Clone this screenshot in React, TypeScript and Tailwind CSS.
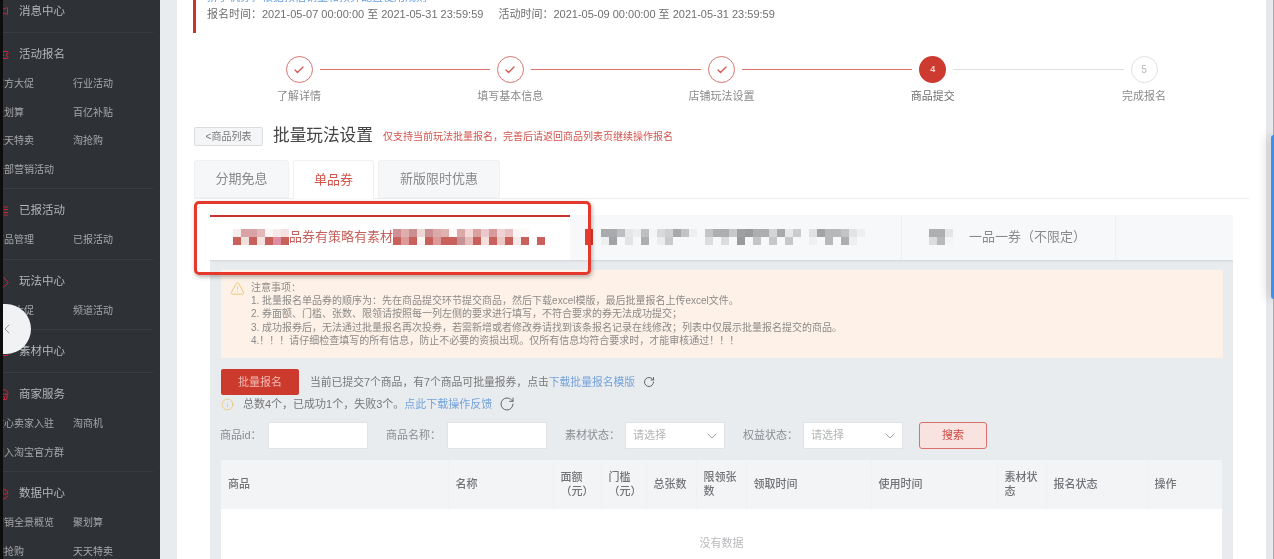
import { Check, ChevronDown, ChevronLeft, Info, LayoutList, Megaphone, MessageSquare, PieChart, RotateCw, Store, Tag, Ticket, TriangleAlert } from 'lucide-react'

const font = { fontFamily: '"Liberation Sans", "Noto Sans CJK SC", sans-serif' }

const menu = [
  { title: '消息中心', Icon: Megaphone, items: [] as string[] },
  { title: '活动报名', Icon: Ticket, items: ['官方大促', '行业活动', '聚划算', '百亿补贴', '天天特卖', '淘抢购', '全部营销活动'] },
  { title: '已报活动', Icon: LayoutList, items: ['商品管理', '已报活动'] },
  { title: '玩法中心', Icon: Tag, items: ['品牌大促', '频道活动'] },
  { title: '素材中心', Icon: MessageSquare, items: [] },
  { title: '商家服务', Icon: Store, items: ['放心卖家入驻', '淘商机', '加入淘宝官方群'] },
  { title: '数据中心', Icon: PieChart, items: ['营销全景概览', '聚划算', '淘抢购', '天天特卖'] },
]

const steps = [
  { label: '了解详情', state: 'done' },
  { label: '填写基本信息', state: 'done' },
  { label: '店铺玩法设置', state: 'done' },
  { label: '商品提交', state: 'current' },
  { label: '完成报名', state: 'todo' },
]

const notes = [
  '注意事项：',
  '1. 批量报名单品券的顺序为：先在商品提交环节提交商品，然后下载excel模版，最后批量报名上传excel文件。',
  '2. 券面额、门槛、张数、限领请按照每一列左侧的要求进行填写，不符合要求的券无法成功提交；',
  '3. 成功报券后，无法通过批量报名再次投券，若需新增或者修改券请找到该条报名记录在线修改；列表中仅展示批量报名提交的商品。',
  '4.！！！请仔细检查填写的所有信息，防止不必要的资损出现。仅所有信息均符合要求时，才能审核通过！！！',
]

const columns = [
  { label: <>商品</>, width: 'w-[227px]' },
  { label: <>名称</>, width: 'w-[105px]' },
  { label: <>面额<br />（元）</>, width: 'w-[48px]' },
  { label: <>门槛<br />（元）</>, width: 'w-[45px]' },
  { label: <>总张数</>, width: 'w-[50px]' },
  { label: <>限领张数</>, width: 'w-[50px]' },
  { label: <>领取时间</>, width: 'w-[125px]' },
  { label: <>使用时间</>, width: 'w-[126px]' },
  { label: <>素材状态</>, width: 'w-[49px]' },
  { label: <>报名状态</>, width: 'w-[101px]' },
  { label: <>操作</>, width: 'w-[75px]' },
]

const mosaicA = [
  ['#f6eeeb', '#d9a3a5', '#d9a3a5', '#e2b8b8', '#fbf6f5', '#f6e9e9', '#f8e0e0'],
  ['#c8615b', '#efe1de', '#c8615b', '#f4e2e0', '#c8615b', '#dc8fa2', '#c8615b'],
]
const mosaicB = [
  ['#cf8f96', '#e0adad', '#c98f92', '#ecd6d4', '#c98f92', '#dca9a9', '#e0b1b1', '#fdf8f7', '#dba9a7', '#f3d6d6', '#dba0a0', '#e8c8cc', '#d89a9a', '#efd2d2', '#e6c0c2', '#fbf6f3', '#fdf9f8', '#ffffff', '#ffffff'],
  ['#c8615b', '#dc9a98', '#c8615b', '#fdf5f4', '#c8615b', '#dc9a98', '#c8615b', '#c8615b', '#c49494', '#e8bcb8', '#c8615b', '#f6e0dc', '#c8615b', '#ecc8c4', '#c8615b', '#f6ebe8', '#c8615b', '#ffffff', '#c8615b'],
]
const mosaicC = [
  ['#e23f30', '#f7f8fa', '#a9aaad', '#a9aaad', '#bdbec0', '#e6e7e8', '#eceded', '#bebfc1', '#f4f5f6', '#d8d9da', '#cfd0d1', '#a8a9ab', '#c2c3c4', '#eeefef', '#f7f8fa', '#c4c5c6', '#adaeb0', '#adaeb0', '#c7c8c9', '#9fa0a2', '#9a9b9d', '#adaeb0', '#adaeb0', '#d4d5d6', '#a8a9ab', '#e6e7e8', '#cbcccd', '#f7f8fa', '#e0e1e2', '#a2a3a5', '#b7b8ba', '#b7b8ba', '#c2c3c4', '#e2e3e4', '#eeeff0'],
  ['#e23f30', '#f7f8fa', '#eeeff0', '#a2a3a5', '#f7f8fa', '#e2e3e4', '#f7f8fa', '#adaeb0', '#f7f8fa', '#ebeced', '#c9cacb', '#f7f8fa', '#f7f8fa', '#f7f8fa', '#f7f8fa', '#dcdddf', '#f7f8fa', '#dbdcdd', '#f7f8fa', '#9a9b9d', '#f7f8fa', '#c4c5c6', '#f7f8fa', '#c6c7c8', '#f7f8fa', '#c6c7c8', '#f7f8fa', '#f7f8fa', '#eff0f1', '#f7f8fa', '#b7b8ba', '#f7f8fa', '#adaeb0', '#eeeff0', '#f7f8fa'],
]
const mosaicD = [
  ['#aeafb1', '#aeafb1', '#e4e5e6'],
  ['#dcdddf', '#b8b9bb', '#f4f5f6'],
]

const Mosaic = ({ rows }: { rows: string[][] }) => (
  <svg width={rows[0].length * 8} height={16} className="shrink-0">
    {rows.map((row, y) => row.map((fill, x) => <rect key={`${x}-${y}`} x={x * 8} y={y * 8} width={8} height={8} fill={fill} />))}
  </svg>
)

const Sidebar = () => (
  <div className="w-[157px] shrink-0 overflow-hidden bg-[#2e3136]">
    <div className="-ml-[9px] -mt-[10px] w-[159px]">
      {menu.map(({ title, Icon, items }) => (
        <div key={title} className={`border-b border-[#393c41] pt-[11px] ${items.length > 0 ? 'pb-[4.5px]' : 'pb-[9px]'}`}>
          <div className="flex h-[22px] items-center gap-[10px] pl-[3px] text-[11.5px] text-[#b4b6b8]">
            <Icon size={12} className="shrink-0 text-[#c8283c]" />
            <span>{title}</span>
          </div>
          {items.length > 0 && (
            <div className="mt-[3.5px] grid grid-cols-[79px_1fr] text-[10px] text-[#a5a7a9]">
              {items.map((item, i) => (
                <div key={item + i} className="flex h-[28.5px] items-center whitespace-nowrap">
                  {item}
                </div>
              ))}
            </div>
          )}
        </div>
      ))}
    </div>
  </div>
)

const Steps = () => (
  <div className="ml-[72px] mt-[23px] w-[945px]">
    <div className="flex items-center px-[36.5px]">
      {steps.map((step, i) => (
        <div key={step.label} className={`flex items-center ${i < 4 ? 'flex-1' : ''}`}>
          {step.state === 'done' && (
            <div className="flex h-[27px] w-[27px] shrink-0 items-center justify-center rounded-full border border-[#d4766f] text-[#d2564e]">
              <Check size={12} strokeWidth={2.5} />
            </div>
          )}
          {step.state === 'current' && (
            <div className="flex h-[27px] w-[27px] shrink-0 items-center justify-center rounded-full bg-[#cd3b30] text-[9px] font-bold text-[#f4d4d0]">4</div>
          )}
          {step.state === 'todo' && (
            <div className="flex h-[27px] w-[27px] shrink-0 items-center justify-center rounded-full border border-[#dfe0e2] text-[10px] text-[#b5b6b8]">5</div>
          )}
          {i < 4 && <div className={`mx-[7px] h-px flex-1 ${i < 3 ? 'bg-[#d9736c]' : 'bg-[#dddfe2]'}`} />}
        </div>
      ))}
    </div>
    <div className="mt-[6px] flex justify-between">
      {steps.map((step) => (
        <div key={step.label} className={`w-[100px] text-center text-[11px] leading-[14px] ${step.state === 'current' ? 'text-[#6e6e6e]' : 'text-[#8b8b8b]'}`}>
          {step.label}
        </div>
      ))}
    </div>
  </div>
)

const FilterLabel = ({ children, className }: { children: string; className: string }) => (
  <span className={`text-[11px] text-[#8a8c90] ${className}`}>{children}</span>
)

const Select = () => (
  <div className="flex h-[27px] w-[100px] items-center justify-between border border-[#e2e3e5] bg-white pl-[7px] pr-[4px] text-[11px] text-[#b4b5b7]">
    请选择
    <ChevronDown size={16} strokeWidth={1.25} className="text-[#8d8e90]" />
  </div>
)

const App = () => {
  return (
    <div className="h-[559px] w-[1274px] overflow-hidden" style={font}>
      <div className="relative flex h-[559px] w-[1274px] overflow-hidden bg-[#e9ecef] blur-[0.35px]">
        <div className="w-[3px] shrink-0 bg-[#0d0d0e]" />
        <Sidebar />
        <div className="w-[17px] shrink-0" />

        <main className="relative h-[559px] w-[1089px] shrink-0 overflow-hidden bg-white">
          <div className="ml-[16px] -mt-[10px] border-l-[3px] border-[#c9342c] pb-[11px] pl-[11px]">
            <div className="h-[16px] text-[11px] leading-[14px] text-[#6aa0e0]">拼手机券，根据预估销量和预算配置使用规则</div>
            <div className="flex h-[16px] gap-[15px] text-[11px] leading-[16px] text-[#6f6f6f]">
              <span>报名时间：2021-05-07 00:00:00 至 2021-05-31 23:59:59</span>
              <span>活动时间：2021-05-09 00:00:00 至 2021-05-31 23:59:59</span>
            </div>
          </div>

          <Steps />

          <div className="ml-[17px] mt-[24px] flex h-[19px] items-center">
            <button className="h-[19px] w-[69px] rounded-[2px] border border-[#dcdde0] bg-[#f4f5f6] text-[10px] text-[#777]">&lt;商品列表</button>
            <h1 className="ml-[10px] -translate-y-px text-[16.67px] text-[#444]">批量玩法设置</h1>
            <span className="ml-[10px] text-[10px] text-[#d2544c]">仅支持当前玩法批量报名，完善后请返回商品列表页继续操作报名</span>
          </div>

          <div className="ml-[17px] mr-[17px] mt-[14px] flex h-[39px] gap-[4px] border-b border-[#eceef0]">
            <div className="flex h-[38px] w-[95px] items-center justify-center rounded-t-[3px] border border-[#eff0f2] bg-[#f6f7f9] text-[13px] text-[#8a8a8a]">分期免息</div>
            <div className="flex h-[39px] w-[81px] items-center justify-center rounded-t-[3px] border border-b-0 border-[#eff0f2] bg-white text-[13px] text-[#d2564e]">单品券</div>
            <div className="flex h-[38px] w-[122px] items-center justify-center rounded-t-[3px] border border-[#eff0f2] bg-[#f6f7f9] text-[13px] text-[#8a8a8a]">新版限时优惠</div>
          </div>

          <section className="ml-[33px] mt-[16px] w-[1023px]">
            <div className="flex h-[45px] bg-[#f7f8fa] text-[13px]">
              <div className="flex w-[360px] items-center border-t-2 border-[#c9342c] bg-white pb-[3px] pl-[23px] text-[#c4605c]">
                <Mosaic rows={mosaicA} />
                <span className="whitespace-nowrap">品券有策略有素材</span>
                <Mosaic rows={mosaicB} />
              </div>
              <div className="flex w-[332px] items-center border-r border-[#eff0f2] pb-[2px] pl-[15px]">
                <Mosaic rows={mosaicC} />
              </div>
              <div className="flex w-[214px] items-center border-r border-[#eff0f2] pb-[2px] pl-[27px] text-[#8a8a8a]">
                <Mosaic rows={mosaicD} />
                <span className="ml-[16px] whitespace-nowrap">一品一券（不限定）</span>
              </div>
            </div>

            <div className="h-[300px] bg-[#e9ecef] pl-[11px] pr-[10px] pt-[10px] shadow-[inset_0_3px_3px_-2px_#d0d3d8]">
              <div className="flex h-[88px] gap-[6px] bg-[#fdf1e8] pl-[9px] pt-[11px]">
                <TriangleAlert size={15} strokeWidth={1.25} className="shrink-0 text-[#e9bd55]" />
                <div className="text-[10px] leading-[13.2px] text-[#8d8a88]">
                  {notes.map((note) => <p key={note}>{note}</p>)}
                </div>
              </div>

              <div className="mt-[11px] flex h-[26px] items-center text-[10.8px] text-[#777]">
                <button className="h-[26px] w-[78px] rounded-[2px] bg-[#cc3a2e] text-[11px] text-[#f2b9b2]">批量报名</button>
                <span className="ml-[11px]">当前已提交7个商品，有7个商品可批量报券，点击</span>
                <span className="text-[#74a3dc]">下载批量报名模版</span>
                <RotateCw size={12} className="ml-[8px] text-[#666]" />
              </div>
              <div className="mt-[1px] flex h-[16px] items-center text-[11px] text-[#777]">
                <Info size={13} strokeWidth={1.25} className="text-[#e9bd55]" />
                <span className="ml-[9px]">总数4个，已成功1个，失败3个。</span>
                <span className="text-[#74a3dc]">点此下载操作反馈</span>
                <RotateCw size={16} strokeWidth={1.5} className="ml-[7px] text-[#666]" />
              </div>

              <div className="mt-[10px] flex h-[27px] items-center">
                <FilterLabel className="w-[48px] -ml-px">商品id：</FilterLabel>
                <div className="h-[27px] w-[100px] border border-[#e2e3e5] bg-white" />
                <FilterLabel className="ml-[18px] w-[61px]">商品名称：</FilterLabel>
                <div className="h-[27px] w-[100px] border border-[#e2e3e5] bg-white" />
                <FilterLabel className="ml-[18px] w-[60px]">素材状态：</FilterLabel>
                <Select />
                <FilterLabel className="ml-[18px] w-[60px]">权益状态：</FilterLabel>
                <Select />
                <button className="ml-[16px] h-[27px] w-[68px] rounded-[3px] border border-[#d9706a] bg-[#f9e3e1] text-[11px] text-[#cf4a42]">搜索</button>
              </div>

              <table className="mt-[11px] w-[1001px] table-fixed border-collapse text-[11px]">
                <colgroup>
                  {columns.map((col, i) => <col key={i} className={col.width} />)}
                </colgroup>
                <thead>
                  <tr className="h-[49px] bg-[#f3f4f6]">
                    {columns.map((col, i) => (
                      <th key={i} className="border-r border-[#eff0f2] px-[7px] pb-[2px] text-left font-medium leading-[14px] text-[#717376] last:border-r-0">{col.label}</th>
                    ))}
                  </tr>
                </thead>
                <tbody>
                  <tr className="h-[68px] bg-white">
                    <td colSpan={columns.length} className="text-center text-[11px] text-[#b8b9bb]">没有数据</td>
                  </tr>
                </tbody>
              </table>
            </div>
          </section>

          <div className="absolute left-[17px] top-[201px] h-[74px] w-[397px] rounded-[5px] border-[3px] border-[#e4392c] shadow-[1px_2px_4px_rgba(0,0,0,0.3)]" />
        </main>

        <div className="relative w-[8px] shrink-0 border-r border-[#aaacae] bg-[#e6e8eb]">
          <div className="absolute -right-px top-[135px] h-[164px] w-[3px] rounded-l-[3px] bg-[#3d8ff0] shadow-[-4px_0_8px_rgba(0,0,0,0.25)]" />
        </div>

        <div className="absolute left-[3px] top-[304px] flex h-[50px] w-[28px] items-center overflow-hidden rounded-r-full bg-[#f1f2f3] text-[#999]">
          <ChevronLeft size={16} strokeWidth={1.5} className="-ml-[4px]" />
        </div>
      </div>
    </div>
  )
}

export default App
